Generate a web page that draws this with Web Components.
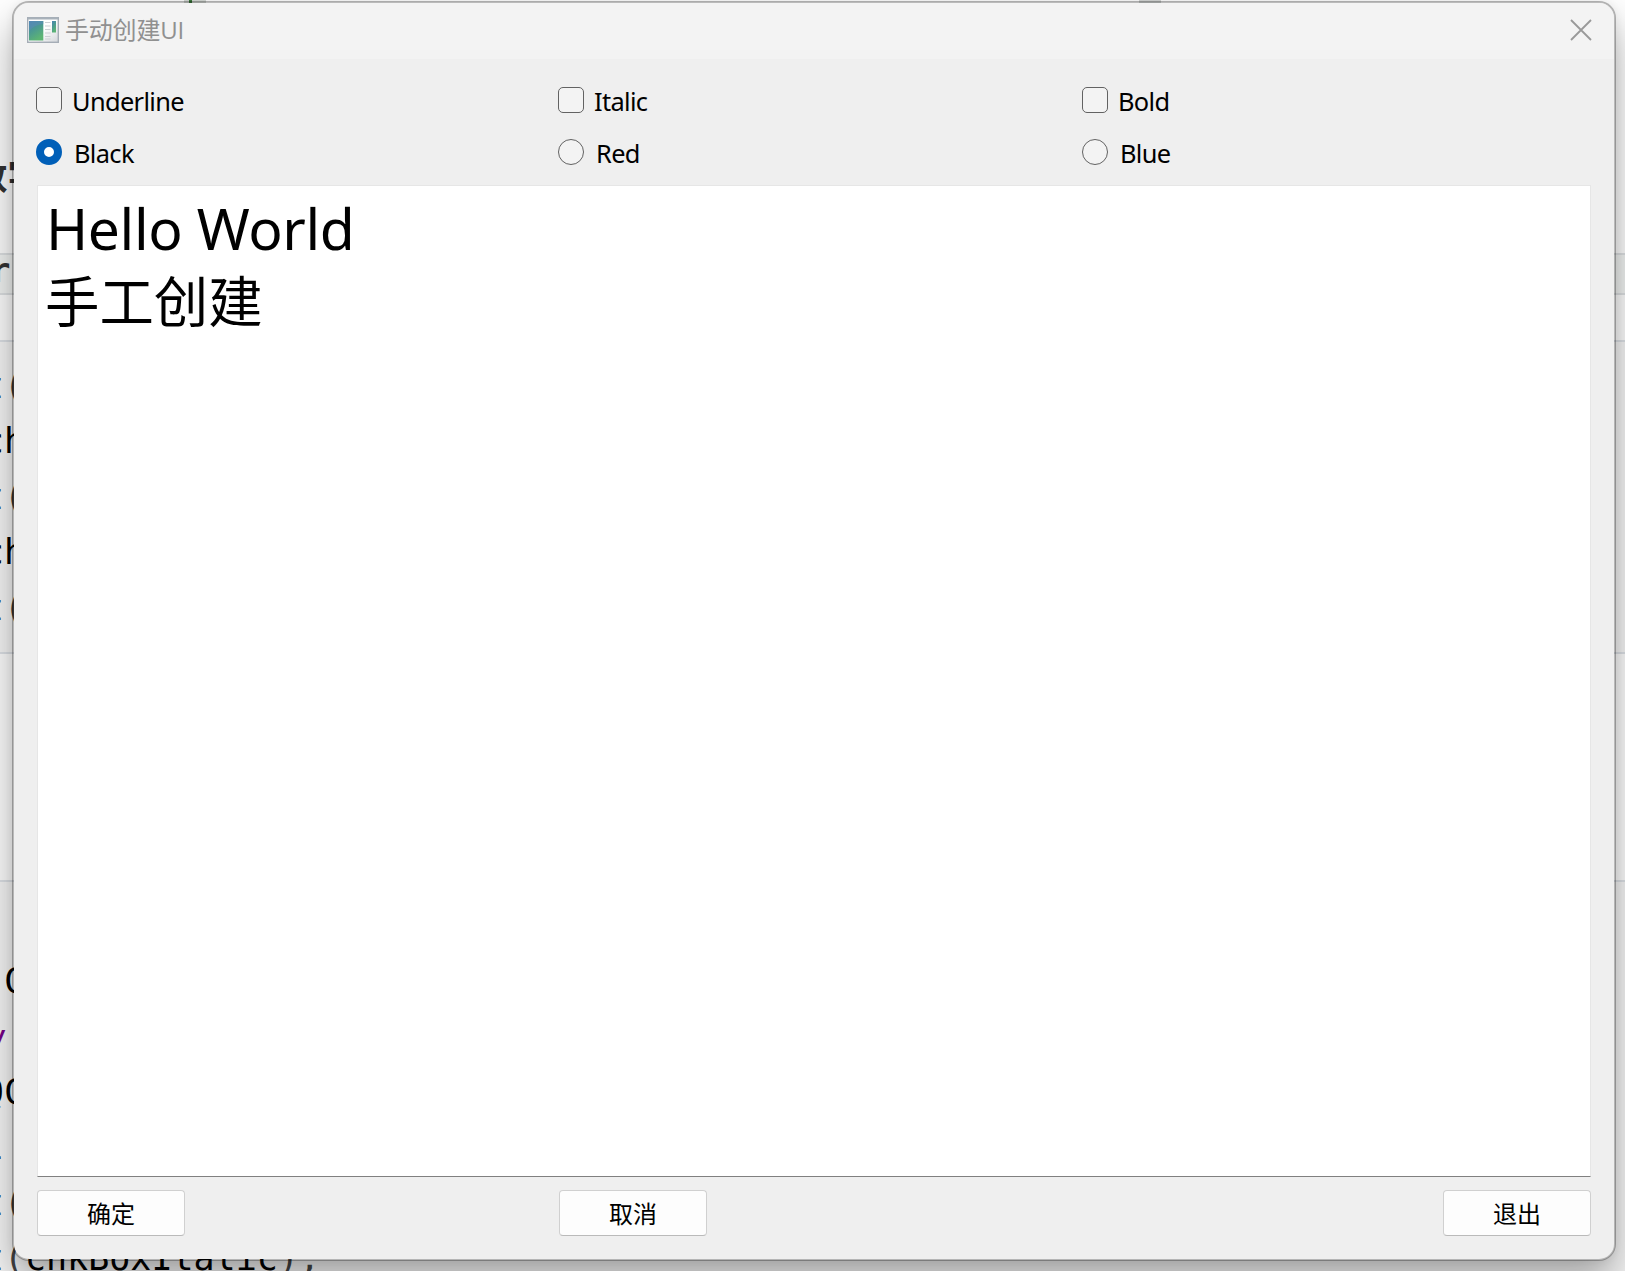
<!DOCTYPE html>
<html lang="zh-CN">
<head>
<meta charset="utf-8">
<title>手动创建UI</title>
<style>
html,body{margin:0;height:100%;overflow:hidden;background:#fff}
body{font-family:"Noto Sans","Noto Sans CJK SC",sans-serif}
</style>
</head>
<body>
<app-desktop></app-desktop>
<script>
const define=(name,html,setup)=>customElements.define(name,class extends HTMLElement{
  constructor(){super();const t=document.createElement('template');t.innerHTML=html;
    this.attachShadow({mode:'open'}).append(t.content.cloneNode(true));}
  connectedCallback(){if(setup)setup(this,this.shadowRoot);}
});

define('code-page',`<style>
:host{display:flex;flex-direction:column;width:1625px;height:1271px;background:#fff;overflow:hidden;color:#000}
.top{height:147px;flex:none;display:flex;padding-left:184px;gap:933px;box-sizing:border-box}
.top i{width:22px;height:3px;background:linear-gradient(105deg,transparent 5px,#3c7a3c 5px 8px,transparent 8px) #d8dcd8}
.top i+i{background:#d4d7d6}
h2{margin:0;height:106px;flex:none;font:bold 36px/54px "Noto Sans CJK SC",sans-serif;color:#333;text-indent:-28.5px;white-space:nowrap}
.inline{height:42px;flex:none;box-sizing:border-box;border:solid #dfe2e4;border-width:2px 0;background:#f3f5f4;font:bold 34px/31px "DejaVu Sans Mono",monospace;color:#333;text-indent:-10px}
.inline b{color:#c08030}
pre{margin:0;box-sizing:border-box;border:solid #dfe3e8;border-width:2px 0;background:#f8f8f8;flex:none;font:35px/55.4px "DejaVu Sans Mono",monospace}
pre div{height:55.4px;margin-left:-17.2px;white-space:pre}
.a{height:314px;margin-top:45px;padding-top:17px}
.b{height:400px;margin-top:226px;padding-top:72px}
.w{color:#770088;font-style:italic;line-height:58px}
.p{color:#444}
</style>
<div class="top"><i></i><i></i></div><h2>数字</h2><div class="inline">r<b>,</b></div>
<pre class="a"><div>t<span class="p">(</span></div><div>ch</div><div>t<span class="p">(</span></div><div>ch</div><div>t<span class="p">(</span></div></pre>
<pre class="b"><div> C</div><div class="w">w</div><div>QC</div><div>l</div><div>t<span class="p">(</span></div><div>t<span class="p">(</span>chkBoxItalic<span class="p">);</span></div></pre>`);

define('title-bar',`<style>
:host{display:flex;align-items:center;height:56px;flex:none;background:#f3f3f3;padding:0 22px 0 13px;color:#909090;font:24px/36px "Open Sans","Noto Sans CJK SC",sans-serif}
.icon{width:32px;height:26px;margin-top:-3px}
span{flex:1;margin:-2px 0 0 6px;white-space:nowrap;letter-spacing:-.2px}
.x{width:22px;height:22px;margin-top:-3px}
</style>
<svg class="icon" viewBox="0 0 32 26"><defs><linearGradient id="g" x1="0" y1="0" x2=".5" y2="1"><stop offset="0" stop-color="#4a83b3"/><stop offset=".5" stop-color="#4b9a91"/><stop offset="1" stop-color="#5db573"/></linearGradient><linearGradient id="h" x1="0" y1="0" x2="1" y2="1"><stop offset=".5" stop-color="#fff"/><stop offset="1" stop-color="#d3d6da"/></linearGradient></defs>
<rect x=".7" y=".7" width="30.6" height="24.6" fill="url(#h)" stroke="#a5adb6" stroke-width="1.4"/>
<path d="M1 1.4H31" stroke="#a8b1ba" stroke-width="2"/>
<rect x="2" y="4" width="14.3" height="19.5" fill="url(#g)"/><path d="M2 14Q7 8 16.3 7V4H2Z" fill="#5b8cba" opacity=".5"/>
<path d="M18 5.5h5.5M18 9h5.5M18 12.5h5.5M18 16h5.5M18 19.5h5.5M18 22h5.5" stroke="#ccd0d4" stroke-width="1.2"/>
<rect x="25" y="4" width="4" height="11.5" fill="url(#g)"/></svg>
<span><slot></slot></span>
<svg class="x" viewBox="0 0 22 22"><path d="M1 1L21 21M21 1L1 21" stroke="#999" stroke-width="1.8" fill="none"/></svg>`);

define('check-option',`<style>
:host{display:flex;align-items:center;height:26px;gap:10px;color:#000;font:25.4px/26px "Noto Sans",sans-serif;letter-spacing:-.65px}
i{box-sizing:border-box;width:26px;height:26px;border:1.4px solid #626262;border-radius:5px;background:#f3f3f3;flex:none}
span{white-space:nowrap;padding-top:2px}
</style><i></i><span><slot></slot></span>`);

define('radio-option',`<style>
:host{display:flex;align-items:center;height:26px;gap:12px;color:#000;font:25.4px/26px "Noto Sans",sans-serif;letter-spacing:-.65px}
i{box-sizing:border-box;width:26px;height:26px;border:1.4px solid #626262;border-radius:50%;background:#f3f3f3;flex:none}
:host([checked]) i{border:8px solid #005fb8;background:#fff}
span{white-space:nowrap;padding-top:2px}
</style><i></i><span><slot></slot></span>`);

define('text-editor',`<style>
:host{display:block;box-sizing:border-box;width:1554px;height:992px;border:1px solid #e6e6e6;border-bottom:1px solid #808080;background:#fff;padding:9px 0 0 8px;color:#000;flex:none}
.l{font:57px/66px "Noto Sans",sans-serif;letter-spacing:-.4px;white-space:nowrap}
.c{font:54.4px/74px "Noto Sans CJK SC",sans-serif;white-space:nowrap;margin:0 0 0 -1px;padding-top:1px}
</style><div class="l"><slot name="latin"></slot></div><div class="c"><slot name="cjk"></slot></div>`);

define('push-button',`<style>
:host{display:flex;align-items:center;justify-content:center;box-sizing:border-box;width:148px;height:46px;border:1px solid #d0d0d0;border-bottom-color:#bababa;border-radius:4px;background:#fdfdfd;color:#000;font:24px/36px "Noto Sans CJK SC",sans-serif}
</style><span><slot></slot></span>`);

define('app-dialog',`<style>
:host{display:flex;flex-direction:column;box-sizing:border-box;width:1604px;height:1260px;border:2px solid rgba(0,0,0,.27);border-radius:17px;background:#efefef;background-clip:padding-box;overflow:hidden;box-shadow:0 22px 42px rgba(0,0,0,.34),0 0 8px rgba(0,0,0,.06)}
.opts{display:grid;grid-template-columns:522px 524px 1fr;row-gap:26px;padding:28px 0 20px 22px}
text-editor{margin-left:23px}
.btns{display:grid;grid-template-columns:522px 1fr 148px;padding:13px 23px 0 23px}
</style>
<title-bar>手动创建UI</title-bar>
<div class="opts">
<check-option>Underline</check-option><check-option>Italic</check-option><check-option>Bold</check-option>
<radio-option checked>Black</radio-option><radio-option>Red</radio-option><radio-option>Blue</radio-option>
</div>
<text-editor><span slot="latin">Hello World</span><span slot="cjk">手工创建</span></text-editor>
<div class="btns"><push-button>确定</push-button><push-button>取消</push-button><push-button>退出</push-button></div>`);

define('app-desktop',`<style>
:host{display:block;position:relative;width:1625px;height:1271px;overflow:hidden}
app-dialog{position:absolute;left:12px;top:1px}
</style><code-page></code-page><app-dialog></app-dialog>`);
</script>
</body>
</html>
